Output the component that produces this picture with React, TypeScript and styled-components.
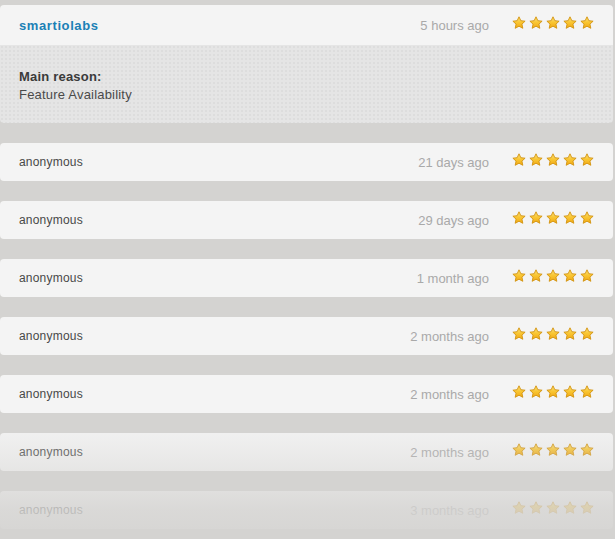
import React from 'react';
import styled, { createGlobalStyle } from 'styled-components';

const GlobalStyle = createGlobalStyle`
  html, body {
    margin: 0;
    padding: 0;
    background: #d4d3d1;
    font-family: 'Liberation Sans', Arial, sans-serif;
  }
`;

const ReviewList = styled.div`
  position: relative;
  display: flex;
  flex-direction: column;
  gap: 20px;
  padding: 5px 2px 0 0;
  height: 534px;
  overflow: hidden;

  /* fade the list out toward the bottom */
  &::after {
    content: '';
    position: absolute;
    left: 0;
    right: 0;
    top: 420px;
    bottom: 0;
    background: linear-gradient(to bottom, rgba(212,211,209,0) 0%, rgba(212,211,209,0.4) 40%, rgba(212,211,209,0.82) 75%, rgba(212,211,209,0.95) 100%);
    pointer-events: none;
  }
`;

const Review = styled.div`
  display: flex;
  flex-direction: column;
  border-radius: 4px;
  overflow: hidden;
  flex-shrink: 0;
`;

const ReviewHead = styled.div<{ open?: boolean }>`
  display: flex;
  align-items: center;
  height: ${p => (p.open ? 40 : 38)}px;
  padding: 0 19px 0 19px;
  background: #f4f4f4;
  box-sizing: border-box;
`;

const Author = styled.span<{ named?: boolean }>`
  flex: 1;
  font-size: ${p => (p.named ? 13 : 12)}px;
  font-weight: ${p => (p.named ? 'bold' : 'normal')};
  color: ${p => (p.named ? '#1b80b6' : '#484848')};
  letter-spacing: ${p => (p.named ? '0.6px' : '0.2px')};
`;

const When = styled.span`
  font-size: 13px;
  color: #a9a9a9;
  margin-right: 23px;
`;

const Stars = styled.div`
  display: flex;
  gap: 3px;
  margin-top: -4px;
`;

const ReviewBody = styled.div`
  background-color: #e5e5e5;
  background-image: radial-gradient(rgba(0,0,0,0.035) 1px, transparent 1px);
  background-size: 4px 4px;
  height: 78px;
  padding: 23px 19px 0;
  box-sizing: border-box;
  font-size: 13px;
  color: #4a4a4a;
  line-height: 18px;
  letter-spacing: 0.2px;
`;

const Label = styled.div`
  font-weight: bold;
  color: #3a3a3a;
`;

const Star = () => (
  <svg width="14" height="14" viewBox="0 0 14 14">
    <defs>
      <linearGradient id="starFill" x1="0" y1="0" x2="0" y2="1">
        <stop offset="0" stopColor="#fde27a" />
        <stop offset="0.5" stopColor="#f9c531" />
        <stop offset="1" stopColor="#f1a816" />
      </linearGradient>
    </defs>
    <path
      d="M7 0.8 L8.85 4.7 L13.1 5.2 L9.95 8.1 L10.8 12.3 L7 10.2 L3.2 12.3 L4.05 8.1 L0.9 5.2 L5.15 4.7 Z"
      fill="url(#starFill)"
      stroke="#d2930f"
      strokeWidth="0.9"
      strokeLinejoin="round"
    />
  </svg>
);

const Rating = () => (
  <Stars>
    {[0, 1, 2, 3, 4].map(i => <Star key={i} />)}
  </Stars>
);

const others = ['21 days ago', '29 days ago', '1 month ago', '2 months ago', '2 months ago', '2 months ago', '3 months ago'];

export default function App() {
  return (
    <>
      <GlobalStyle />
      <ReviewList>
        <Review>
          <ReviewHead open>
            <Author named>smartiolabs</Author>
            <When>5 hours ago</When>
            <Rating />
          </ReviewHead>
          <ReviewBody>
            <Label>Main reason:</Label>
            <div>Feature Availability</div>
          </ReviewBody>
        </Review>
        {others.map((t, i) => (
          <Review key={i}>
            <ReviewHead>
              <Author>anonymous</Author>
              <When>{t}</When>
              <Rating />
            </ReviewHead>
          </Review>
        ))}
      </ReviewList>
    </>
  );
}
